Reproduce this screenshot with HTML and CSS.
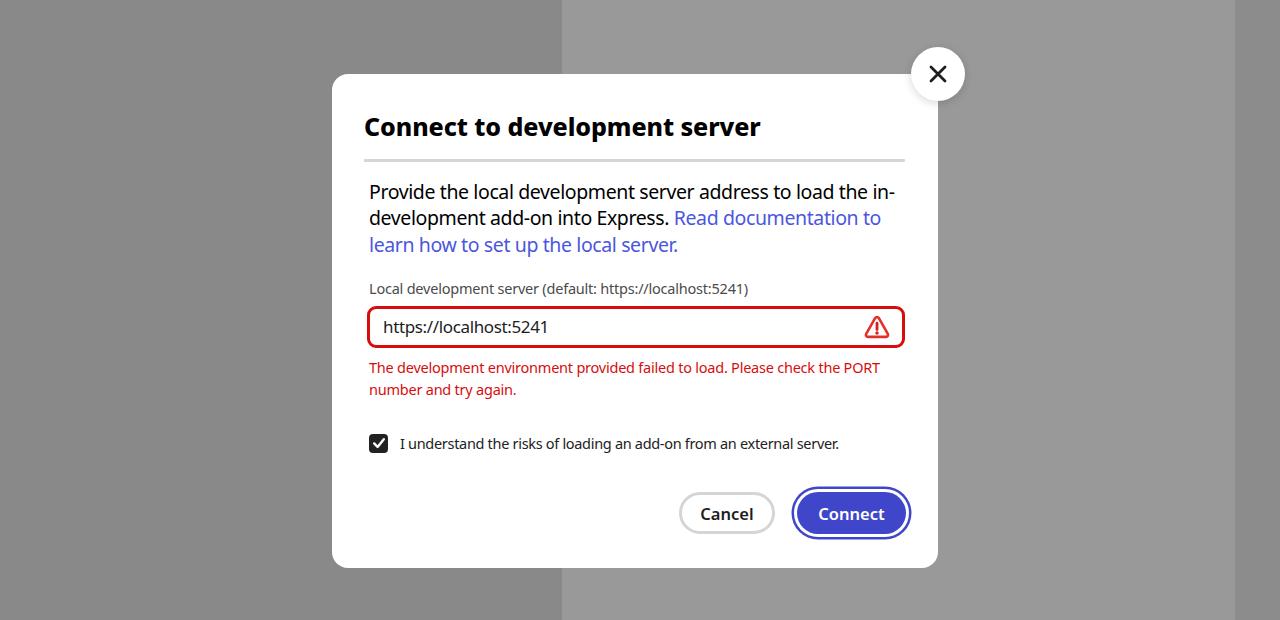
FILE: index.html
```html
<!DOCTYPE html>
<html lang="en">
<head>
<meta charset="utf-8">
<title>Connect to development server</title>
<link rel="stylesheet" href="styles.css">
</head>
<body>
<div class="backdrop">
  <div class="pane pane-left"></div>
  <div class="pane pane-mid"></div>
  <div class="pane pane-right"></div>
</div>
<div class="overlay">
  <section class="dialog">
    <button class="close" aria-label="Close">
      <svg width="18" height="18" viewBox="0 0 18 18"><path d="M2 2 16 16M16 2 2 16" fill="none" stroke="#1d1d1d" stroke-width="2.8" stroke-linecap="round"/></svg>
    </button>
    <h1 class="title">Connect to development server</h1>
    <div class="divider"></div>
    <div class="content">
      <p class="intro">Provide the local development server address to load the in-development add-on into Express. <a class="link" href="#">Read documentation to learn how to set up the local server.</a></p>
      <label class="label">Local development server (default: https://localhost:5241)</label>
      <div class="field">
        <span class="value">https://localhost:5241</span>
        <svg class="warn" width="26" height="24" viewBox="0 0 26 24"><path d="M11.1 3.2 2.2 18.9A2 2 0 0 0 3.9 21.9H22.1A2 2 0 0 0 23.8 18.9L14.9 3.2A2.2 2.2 0 0 0 11.1 3.2Z" fill="none" stroke="#e5302a" stroke-width="2.6" stroke-linejoin="round"/><path d="M13 8.2V14.6" stroke="#d7201c" stroke-width="2.8" stroke-linecap="round"/><circle cx="13" cy="18" r="1.7" fill="#d7201c"/></svg>
      </div>
      <p class="error">The development environment provided failed to load. Please check the PORT number and try again.</p>
      <div class="check-row">
        <span class="check">
          <svg width="14" height="14" viewBox="0 0 14 14"><path d="M2.2 7.4 5.6 11 11.8 3.2" fill="none" stroke="#fff" stroke-width="2.4" stroke-linecap="round" stroke-linejoin="round"/></svg>
        </span>
        <span class="check-label">I understand the risks of loading an add-on from an external server.</span>
      </div>
    </div>
    <div class="actions">
      <button class="btn btn-secondary">Cancel</button>
      <button class="btn btn-primary">Connect</button>
    </div>
  </section>
</div>
</body>
</html>
```
FILE: styles.css
```css
* { box-sizing: border-box; }
html, body { margin: 0; height: 100%; }
body {
  width: 1280px;
  height: 620px;
  overflow: hidden;
  position: relative;
  font-family: "Noto Sans", "Open Sans", sans-serif;
  color: #000;
}
.backdrop { display: flex; height: 620px; }
.pane-left { width: 562px; background: #898989; }
.pane-mid { width: 673px; background: #999; }
.pane-right { flex: 1; background: #8c8c8c; }
.overlay {
  position: absolute;
  inset: 0;
  display: flex;
  justify-content: center;
  padding: 74px 10px 0 0;
}
.dialog {
  position: relative;
  width: 606px;
  height: 494px;
  background: #fff;
  border-radius: 16px;
  padding: 32px;
  display: flex;
  flex-direction: column;
}
.close {
  position: absolute;
  top: -27px;
  right: -27px;
  width: 54px;
  height: 54px;
  border: 0;
  border-radius: 50%;
  background: #fff;
  box-shadow: 0 2px 8px rgba(0,0,0,.16);
  display: flex;
  align-items: center;
  justify-content: center;
  padding: 0;
}
.title {
  margin: -1px 0 0;
  font-size: 25px;
  line-height: 42px;
  font-weight: 800;
  letter-spacing: -.07px;
}
.divider { height: 3px; background: #d5d5d5; margin: 12px 1px 0 0; border-radius: 1px; }
.content { padding: 17px 1px 0 5px; }
.intro { margin: 0; font-size: 19.5px; line-height: 26.4px; letter-spacing: -.39px; }
.link { color: #4b56e0; text-decoration: none; }
.label { display: block; margin-top: 20px; font-size: 14.5px; line-height: 20px; color: #4b4b4b; letter-spacing: -.22px; }
.field {
  margin: 8px 0 0 -2px;
  height: 42px;
  border: 3px solid #d70d0d;
  border-radius: 9px;
  display: flex;
  align-items: center;
  justify-content: space-between;
  padding: 0 12px 0 13px;
}
.value { font-size: 17px; color: #1d1d1d; letter-spacing: -.36px; margin-top: -1px; }
.error { margin: 8px 0 0; font-size: 14.5px; line-height: 22px; color: #d70d0d; letter-spacing: -.23px; }
.check-row { display: flex; align-items: center; gap: 12px; margin-top: 32px; }
.check {
  width: 19px;
  height: 19px;
  border-radius: 4px;
  background: #222;
  display: flex;
  align-items: center;
  justify-content: center;
}
.check-label { font-size: 14.5px; line-height: 22px; color: #222; letter-spacing: -.31px; }
.actions { display: flex; justify-content: flex-end; align-items: center; gap: 22px; margin-top: 38px; }
.btn {
  font-family: inherit;
  font-size: 16.5px;
  font-weight: 600;
  height: 42px;
  border-radius: 21px;
  padding: 0;
}
.btn-secondary { width: 96px; background: #fff; border: 3px solid #d5d5d5; color: #1d1d1d; }
.btn-primary {
  width: 109px;
  background: #4046ca;
  border: 0;
  color: #fff;
  box-shadow: 0 0 0 3px #fff, 0 0 0 5.5px #4046ca;
}
```
